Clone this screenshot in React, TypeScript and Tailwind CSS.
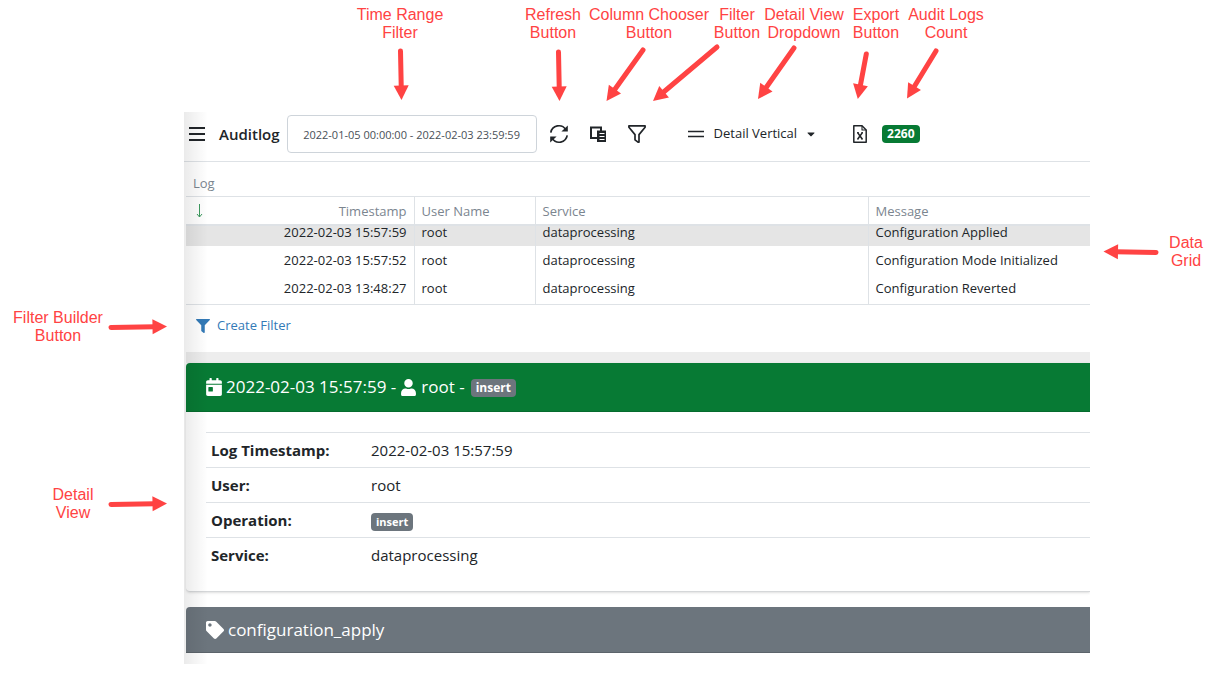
import {
  FaCalendarDay,
  FaCaretDown,
  FaFilter,
  FaTag,
  FaUser,
} from "react-icons/fa";

const logs = [
  { time: "2022-02-03 15:57:59", user: "root", service: "dataprocessing", message: "Configuration Applied" },
  { time: "2022-02-03 15:57:52", user: "root", service: "dataprocessing", message: "Configuration Mode Initialized" },
  { time: "2022-02-03 13:48:27", user: "root", service: "dataprocessing", message: "Configuration Reverted" },
];

// callouts drawn over the page, one arrow each
const callouts = [
  { lines: ["Time Range", "Filter"], x: 400, y: 6, from: [400.5, 51], to: [401.5, 100] },
  { lines: ["Refresh", "Button"], x: 553, y: 6, from: [558.5, 52], to: [559.5, 101] },
  { lines: ["Column Chooser", "Button"], x: 649, y: 6, from: [643, 50], to: [606.5, 101] },
  { lines: ["Filter", "Button"], x: 737, y: 6, from: [717, 47], to: [653, 101] },
  { lines: ["Detail View", "Dropdown"], x: 804, y: 6, from: [794, 48], to: [758, 99] },
  { lines: ["Export", "Button"], x: 876, y: 6, from: [866.3, 54], to: [857.8, 99] },
  { lines: ["Audit Logs", "Count"], x: 946, y: 6, from: [936, 51], to: [907, 98.5] },
  { lines: ["Filter Builder", "Button"], x: 58, y: 309, from: [111, 327.5], to: [167, 326.5] },
  { lines: ["Detail", "View"], x: 73, y: 486, from: [111, 504.5], to: [167, 503.5] },
  { lines: ["Data", "Grid"], x: 1186, y: 234, from: [1156, 252.5], to: [1103.5, 251.5] },
];

function Arrow({ from, to }: any) {
  const len = Math.hypot(to[0] - from[0], to[1] - from[1]);
  const angle = (Math.atan2(to[1] - from[1], to[0] - from[0]) * 180) / Math.PI;
  return (
    <g transform={`translate(${from[0]} ${from[1]}) rotate(${angle})`}>
      <line x1="0" y1="0" x2={len - 12} y2="0" stroke="#ff4343" strokeWidth="5" strokeLinecap="round" />
      <path d={`M${len} 0 L${len - 14.5} -7.5 V7.5 Z`} fill="#ff4343" />
    </g>
  );
}

function Callouts() {
  return (
    <div className="pointer-events-none absolute inset-0 overflow-hidden">
      <svg className="absolute inset-0 h-full w-full">
        {callouts.map((c) => (
          <Arrow key={c.lines.join(" ")} from={c.from} to={c.to} />
        ))}
      </svg>
      {callouts.map((c) => (
        <div
          key={c.lines.join(" ")}
          className="absolute -translate-x-1/2 text-center font-['Liberation_Sans',sans-serif] text-[16px] leading-[18px] whitespace-nowrap text-[#ff4343]"
          style={{ left: c.x, top: c.y }}
        >
          {c.lines[0]}
          <br />
          {c.lines[1]}
        </div>
      ))}
    </div>
  );
}

function MenuIcon() {
  return (
    <svg width="16" height="16" viewBox="0 0 16 16" stroke="currentColor" strokeWidth="2">
      <path d="M0 2H16M0 8H16M0 14H16" />
    </svg>
  );
}

function RefreshIcon() {
  return (
    <svg width="20" height="20" viewBox="0 0 20 20" fill="none" stroke="currentColor" strokeWidth="1.7">
      <path d="M1.8 8.6A8.2 8.2 0 0 1 16.8 5.6" />
      <path d="M18.2 11.4A8.2 8.2 0 0 1 3.2 14.4" />
      <path d="M18.8 1.4V7.6H12.4Z" fill="currentColor" stroke="none" />
      <path d="M1.2 18.6V12.4H7.6Z" fill="currentColor" stroke="none" />
    </svg>
  );
}

function ColumnsIcon() {
  return (
    <svg width="18" height="16" viewBox="0 0 18 16" fill="none">
      <path d="M9 12H2V1.5H12V5" stroke="currentColor" strokeWidth="2" />
      <path d="M8 4.5H17V16H8Z" fill="currentColor" />
      <path d="M10.5 7.5H15.5M10.5 10.5H15.5M10.5 13.5H15.5" stroke="white" strokeWidth="1" />
    </svg>
  );
}

function FunnelIcon() {
  return (
    <svg width="18" height="18" viewBox="0 0 18 18" fill="none" stroke="currentColor" strokeWidth="1.7" strokeLinejoin="round">
      <path d="M0.9 0.9H17.1V2.3L11 9.6V17.1H10L7 14.8V9.6L0.9 2.3Z" />
    </svg>
  );
}

function ExcelIcon() {
  return (
    <svg width="14" height="18" viewBox="0 0 14 18" fill="none" stroke="currentColor" strokeWidth="1.5" strokeLinejoin="round">
      <path d="M0.8 0.8H9L13.2 5V17.2H0.8Z" />
      <path d="M9 0.8V5H13.2" strokeWidth="1.1" />
      <path d="M4.6 7.6L9.2 14M9.4 7.6L4.8 14" strokeWidth="1.6" />
      <path d="M4 7.6H5.8M8.4 7.6H10M4 14H5.6M8.2 14H10" strokeWidth="1" />
    </svg>
  );
}

function Toolbar() {
  return (
    <header className="flex h-[50px] items-center border-b border-[#dee2e6] pb-[5px] pl-[5px]">
      <button aria-label="Menu" className="mr-3.5">
        <MenuIcon />
      </button>
      <h1 className="mr-[7px] text-[15px] font-semibold">Auditlog</h1>
      <input
        aria-label="Time range"
        defaultValue="2022-01-05 00:00:00 - 2022-02-03 23:59:59"
        className="h-[38px] w-[250px] rounded border border-[#ced4da] bg-white text-center text-[11px] text-[#495057]"
      />
      <button aria-label="Refresh" className="ml-3">
        <RefreshIcon />
      </button>
      <button aria-label="Column chooser" className="ml-5">
        <ColumnsIcon />
      </button>
      <button aria-label="Filter" className="ml-[21px]">
        <FunnelIcon />
      </button>
      <button className="ml-[42px] flex items-center text-[13px]">
        <svg width="16" height="8" viewBox="0 0 16 8" stroke="currentColor" strokeWidth="1.6">
          <path d="M0 1.5H16M0 6.5H16" />
        </svg>
        <span className="ml-2.5">Detail Vertical</span>
        <FaCaretDown className="ml-2 size-3" />
      </button>
      <button aria-label="Export" className="ml-9">
        <ExcelIcon />
      </button>
      <span className="ml-[15px] rounded bg-[#077a34] px-[5px] text-[12px] leading-[18px] font-bold text-white">2260</span>
    </header>
  );
}

function LogGrid() {
  const rowHeights = ["h-5 [&>td]:pb-2", "h-7", "h-[31px] [&>td]:pb-0.5"];
  return (
    <section className="pl-0.5">
      <div className="flex h-[34px] items-end pb-[3px] pl-[7px] text-[13px] text-[#7b858f]">Log</div>
      <table className="w-full table-fixed border-collapse border-y border-[#dee2e6] text-[13px]">
        <colgroup>
          <col className="w-[228px]" />
          <col className="w-[121px]" />
          <col className="w-[333px]" />
          <col />
        </colgroup>
        <thead>
          <tr className="h-7 border-b-2 border-[#dee2e6] text-left text-[#7b858f] [&>th]:border-r [&>th]:border-[#dee2e6] [&>th]:px-[7px] [&>th]:pt-0.5 [&>th]:font-normal [&>th:last-child]:border-r-0">
            <th>
              <div className="flex items-center justify-between">
                <svg width="12" height="14" viewBox="0 0 12 14" fill="none" stroke="#3d9a5f">
                  <path d="M6.5 0V13M4 10L6.5 13L9 10" />
                </svg>
                Timestamp
              </div>
            </th>
            <th>User Name</th>
            <th>Service</th>
            <th>Message</th>
          </tr>
        </thead>
        <tbody>
          {logs.map((log, i) => (
            <tr
              key={log.time}
              className={`${rowHeights[i]} ${i === 0 ? "bg-[#e5e5e5]" : ""} leading-3 [&>td]:border-r [&>td]:border-[#dee2e6] [&>td]:px-[7px] [&>td:last-child]:border-r-0`}
            >
              <td className="text-right">{log.time}</td>
              <td>{log.user}</td>
              <td>{log.service}</td>
              <td className="whitespace-nowrap">{log.message}</td>
            </tr>
          ))}
        </tbody>
      </table>
      <button className="flex h-[47px] items-center gap-[7px] pb-1.5 pl-2.5 text-[13px] text-[#337ab7]">
        <FaFilter className="size-3.5" />
        Create Filter
      </button>
    </section>
  );
}

function Badge({ text, className = "text-[11px]" }: { text: string; className?: string }) {
  return (
    <span className={`inline-block rounded bg-[#6c757d] px-[5px] font-bold text-white ${className} leading-[18px]`}>{text}</span>
  );
}

function Row({ label, children }: any) {
  return (
    <tr className="h-[35px] border-t border-[#dee2e6] last:h-[34px]">
      <th scope="row" className="w-40 pl-[5px] text-left font-bold">{label}</th>
      <td className="pl-[5px]">{children}</td>
    </tr>
  );
}

function DetailView() {
  return (
    <section className="pl-0.5">
      <div className="h-[11px] bg-[#ededed]" />
      <article className="rounded-l border-b border-[#d5d7d9] shadow-sm">
        <h2 className="flex h-[49px] items-center rounded-tl border-b border-[#066b2e] bg-[#077a34] pl-[19px] text-[17px] text-white">
          <FaCalendarDay className="mr-[3px] size-[18px]" />
          2022-02-03 15:57:59 -
          <FaUser className="mx-1 size-[17px]" />
          root -
          <span className="mt-0.5 ml-1.5 flex">
            <Badge text="insert" className="text-[12px]" />
          </span>
        </h2>
        <div className="pt-5 pb-[19px] pl-5">
          <table className="w-full border-collapse text-[15px]">
            <tbody>
              <Row label="Log Timestamp:">2022-02-03 15:57:59</Row>
              <Row label="User:">root</Row>
              <Row label="Operation:">
                <Badge text="insert" />
              </Row>
              <Row label="Service:">dataprocessing</Row>
            </tbody>
          </table>
        </div>
      </article>
      <h2 className="mt-[15px] flex h-[46px] items-center rounded-tl border-b border-[#5c646b] bg-[#6c757d] pt-0.5 pl-5 text-[17px] text-white">
        <FaTag className="mr-1 size-[18px]" />
        configuration_apply
      </h2>
      <div className="h-[11px]" />
    </section>
  );
}

export default function App() {
  return (
    <div className="relative min-h-screen bg-white pt-28 pr-[127px] pl-[184px] font-['Open_Sans',sans-serif] text-[#212529]">
      <main className="relative overflow-hidden">
        <Toolbar />
        <LogGrid />
        <DetailView />
        <div className="pointer-events-none absolute inset-y-0 left-0 w-6 bg-linear-to-r from-black/8 to-transparent" />
      </main>
      <Callouts />
    </div>
  );
}
